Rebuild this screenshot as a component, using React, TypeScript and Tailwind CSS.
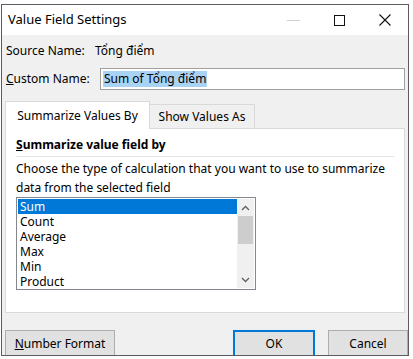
import React from 'react';

const items = ['Sum', 'Count', 'Average', 'Max', 'Min', 'Product'];

const font = { fontFamily: '"Noto Sans", "Open Sans", sans-serif' };

function Chevron({ up }: { up?: boolean }) {
  return (
    <svg width="9" height="6" viewBox="0 0 9 6" className="block">
      <path
        d={up ? 'M1 5 L4.5 1.5 L8 5' : 'M1 1 L4.5 4.5 L8 1'}
        fill="none"
        stroke="#606060"
        strokeWidth="1.3"
      />
    </svg>
  );
}

export default function App() {
  return (
    <div className="w-[413px] h-[359px] bg-white pt-[4px] pl-[1px] text-[12px] text-black whitespace-nowrap" style={font}>
      <div className="w-[408px] h-[352px] border border-[#5c5c5c] bg-[#f0f0f0] flex flex-col overflow-hidden">
        {/* title bar */}
        <div className="h-[30px] bg-white flex items-center shrink-0">
          <span className="pl-[6px] text-[13px] flex-1">Value Field Settings</span>
          <div className="w-[46px] h-[30px] flex items-center justify-center">
            <div className="w-[13px] h-[1px] bg-[#d0d0d0]" />
          </div>
          <div className="w-[46px] h-[30px] flex items-center justify-center">
            <div className="w-[11px] h-[11px] border border-[#111]" />
          </div>
          <div className="w-[46px] h-[30px] flex items-center justify-center">
            <svg width="12" height="12" viewBox="0 0 12 12">
              <path d="M0.5 0.5 L11.5 11.5 M11.5 0.5 L0.5 11.5" stroke="#111" strokeWidth="1.1" />
            </svg>
          </div>
        </div>

        {/* source name */}
        <div className="h-[32px] flex items-center pl-[4px] shrink-0">
          <span className="w-[89px]">Source Name:</span>
          <span>Tổng điểm</span>
        </div>

        {/* custom name */}
        <div className="h-[22px] mt-[1px] flex items-center pl-[4px] shrink-0">
          <span className="w-[94px]">
            <span className="underline">C</span>ustom Name:
          </span>
          <div className="flex-1 h-[22px] mr-[3px] bg-white border border-[#a0a0a0] flex items-center pl-[2px]">
            <span className="bg-[#a9d3f5] leading-[16px] px-[1px]">Sum of Tổng điểm</span>
          </div>
        </div>

        {/* tabs */}
        <div className="mt-[10px] ml-[3px] flex items-end h-[28px] shrink-0">
          <div className="h-[28px] w-[145px] bg-white border border-b-0 border-[#d9d9d9] flex items-center justify-center relative z-10 mb-[-1px]">
            Summarize Values By
          </div>
          <div className="h-[24px] w-[105px] bg-[#f0f0f0] border border-l-0 border-b-0 border-[#d9d9d9] flex items-center justify-center">
            Show Values As
          </div>
        </div>

        {/* panel */}
        <div className="ml-[3px] w-[400px] h-[185px] bg-white border border-[#d9d9d9] px-[10px] shrink-0">
          <div className="h-[28px] flex items-end pb-[2px] font-bold border-b border-[#e3e3e3]">
            <span>
              <span className="underline">S</span>ummarize value field by
            </span>
          </div>
          <div className="pt-[2px] leading-[19px]">
            Choose the type of calculation that you want to use to summarize
            <br />
            data from the selected field
          </div>
          <div className="w-[240px] h-[93px] border border-[#828790] flex p-[1px]">
            <div className="flex-1 flex flex-col">
              {items.map((it, i) => (
                <div
                  key={it}
                  className={`h-[15px] leading-[15px] pl-[2px] ${i === 0 ? 'bg-[#0078d7] text-white' : ''}`}
                >
                  {it}
                </div>
              ))}
            </div>
            <div className="w-[17px] bg-[#f0f0f0] flex flex-col">
              <div className="h-[17px] flex items-center justify-center">
                <Chevron up />
              </div>
              <div className="h-[28px] mx-[1px] bg-[#cdcdcd]" />
              <div className="flex-1" />
              <div className="h-[17px] flex items-center justify-center">
                <Chevron />
              </div>
            </div>
          </div>
        </div>

        {/* buttons */}
        <div className="mt-[17px] flex pl-[3px] shrink-0">
          <div className="w-[110px] h-[27px] bg-[#e1e1e1] border border-[#adadad] flex items-center justify-center">
            <span>
              <span className="underline">N</span>umber Format
            </span>
          </div>
          <div className="ml-[118px] w-[82px] h-[27px] bg-[#e1e1e1] border-2 border-[#0078d7] flex items-center justify-center">
            OK
          </div>
          <div className="ml-[13px] w-[80px] h-[27px] bg-[#e1e1e1] border border-[#adadad] flex items-center justify-center">
            Cancel
          </div>
        </div>
      </div>
    </div>
  );
}
